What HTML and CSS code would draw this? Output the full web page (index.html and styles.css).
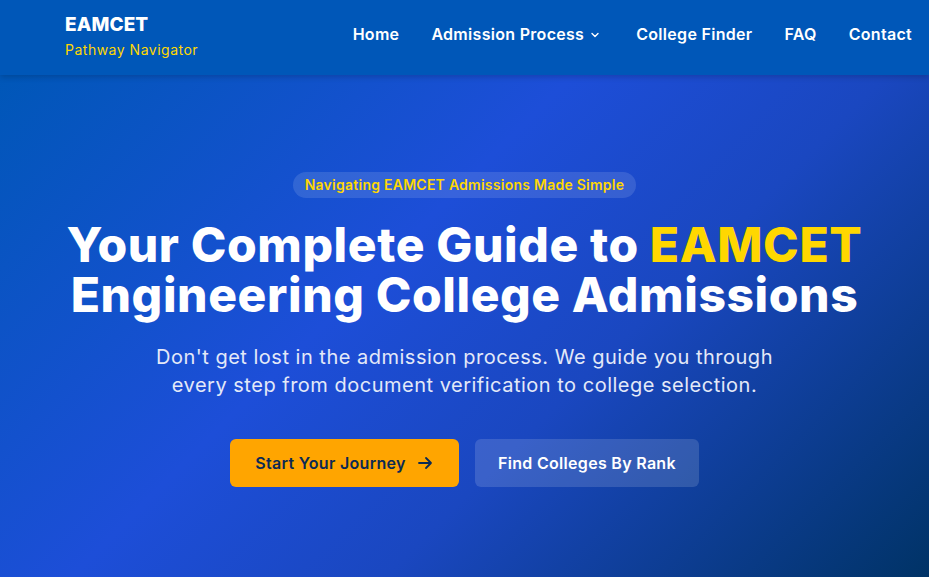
FILE: index.html
```html
<!DOCTYPE html>
<html lang="en">
<head>
<meta charset="utf-8">
<title>EAMCET Pathway Navigator</title>
<link rel="stylesheet" href="styles.css">
</head>
<body>
<header class="site-header">
  <div class="brand">
    <div class="brand-title">EAMCET</div>
    <div class="brand-sub">Pathway Navigator</div>
  </div>
  <nav class="nav">
    <a class="nav-link" href="#">Home</a>
    <a class="nav-link nav-drop" href="#">Admission Process
      <svg class="chev" width="12" height="12" viewBox="0 0 12 12" fill="none" stroke="currentColor" stroke-width="1.4" stroke-linecap="round" stroke-linejoin="round"><path d="M3 4.5 L6 7.5 L9 4.5"/></svg>
    </a>
    <a class="nav-link" href="#">College Finder</a>
    <a class="nav-link" href="#">FAQ</a>
    <a class="nav-link" href="#">Contact</a>
  </nav>
</header>
<main class="hero">
  <div class="hero-inner">
    <span class="badge">Navigating EAMCET Admissions Made Simple</span>
    <h1 class="hero-title"><span class="line">Your Complete Guide to <span class="accent">EAMCET</span></span><span class="line">Engineering College Admissions</span></h1>
    <p class="hero-text"><span class="line">Don't get lost in the admission process. We guide you through</span><span class="line">every step from document verification to college selection.</span></p>
    <div class="actions">
      <a class="btn btn-primary" href="#">Start Your Journey
        <svg width="18" height="18" viewBox="0 0 18 18" fill="none" stroke="currentColor" stroke-width="1.8" stroke-linecap="round" stroke-linejoin="round"><path d="M3 9 H15 M10 4 L15 9 L10 14"/></svg>
      </a>
      <a class="btn btn-secondary" href="#">Find Colleges By Rank</a>
    </div>
  </div>
</main>
</body>
</html>
```

FILE: styles.css
```css
* { box-sizing: border-box; }
html, body { margin: 0; padding: 0; }
body {
  font-family: "Inter", "Open Sans", sans-serif;
  background: #1d4ed8;
  height: 577px;
  overflow: hidden;
  display: flex;
  flex-direction: column;
}
a { text-decoration: none; color: inherit; }

.site-header {
  position: relative;
  z-index: 2;
  height: 75px;
  background: #0057b8;
  box-shadow: 0 2px 6px rgba(0, 0, 0, 0.18);
  display: flex;
  align-items: center;
  justify-content: space-between;
  padding: 0 17px 0 65px;
}
.brand { display: flex; flex-direction: column; }
.brand-title {
  color: #fff;
  font-weight: 800;
  font-size: 19px;
  line-height: 24px;
  letter-spacing: 0.1px;
  margin-top: -2px;
}
.brand-sub {
  color: #ffd700;
  font-size: 14px;
  line-height: 20px;
  margin-top: 3px;
  letter-spacing: 0.5px;
}
.nav {
  display: flex;
  align-items: center;
  gap: 32px;
  margin-top: -7px;
}
.nav-link {
  color: #fff;
  font-weight: 600;
  font-size: 16px;
  letter-spacing: 0.3px;
  display: flex;
  align-items: center;
  gap: 5px;
}
.nav-drop { margin-right: 3px; }
.chev { margin-top: 1px; }

.hero {
  flex: 1;
  background: linear-gradient(135deg, #0057b8 0%, #1d4ed8 40%, #1a47c0 62%, #003366 100%);
  display: flex;
  justify-content: center;
}
.hero-inner {
  display: flex;
  flex-direction: column;
  align-items: center;
  text-align: center;
  padding-top: 97px;
}
.badge {
  display: inline-block;
  background: rgba(255, 255, 255, 0.12);
  color: #ffd700;
  font-size: 14px;
  font-weight: 600;
  line-height: 26px;
  height: 26px;
  padding: 0 12px;
  border-radius: 13px;
  letter-spacing: 0.25px;
}
.hero-title {
  margin: 22px 0 0;
  color: #fff;
  font-size: 48px;
  font-weight: 800;
  letter-spacing: 0.6px;
  white-space: nowrap;
  display: flex;
  flex-direction: column;
  align-items: center;
}
.line { display: block; }
.hero-title .line { height: 50px; line-height: 50px; }
.accent { color: #ffd700; }
.hero-text {
  margin: 23px 0 0;
  color: #e3e9f8;
  font-size: 20px;
  line-height: 28px;
  font-weight: 400;
  letter-spacing: 0.5px;
  white-space: nowrap;
}
.actions {
  display: flex;
  gap: 16px;
  margin-top: 40px;
}
.btn {
  height: 48px;
  display: flex;
  align-items: center;
  justify-content: center;
  border-radius: 6px;
  font-size: 16px;
  font-weight: 600;
  letter-spacing: 0.3px;
}
.btn-primary {
  width: 229px;
  background: #ffa500;
  color: #0b2a55;
  gap: 10px;
}
.btn-secondary {
  width: 224px;
  background: rgba(255, 255, 255, 0.14);
  color: #fff;
}
```
